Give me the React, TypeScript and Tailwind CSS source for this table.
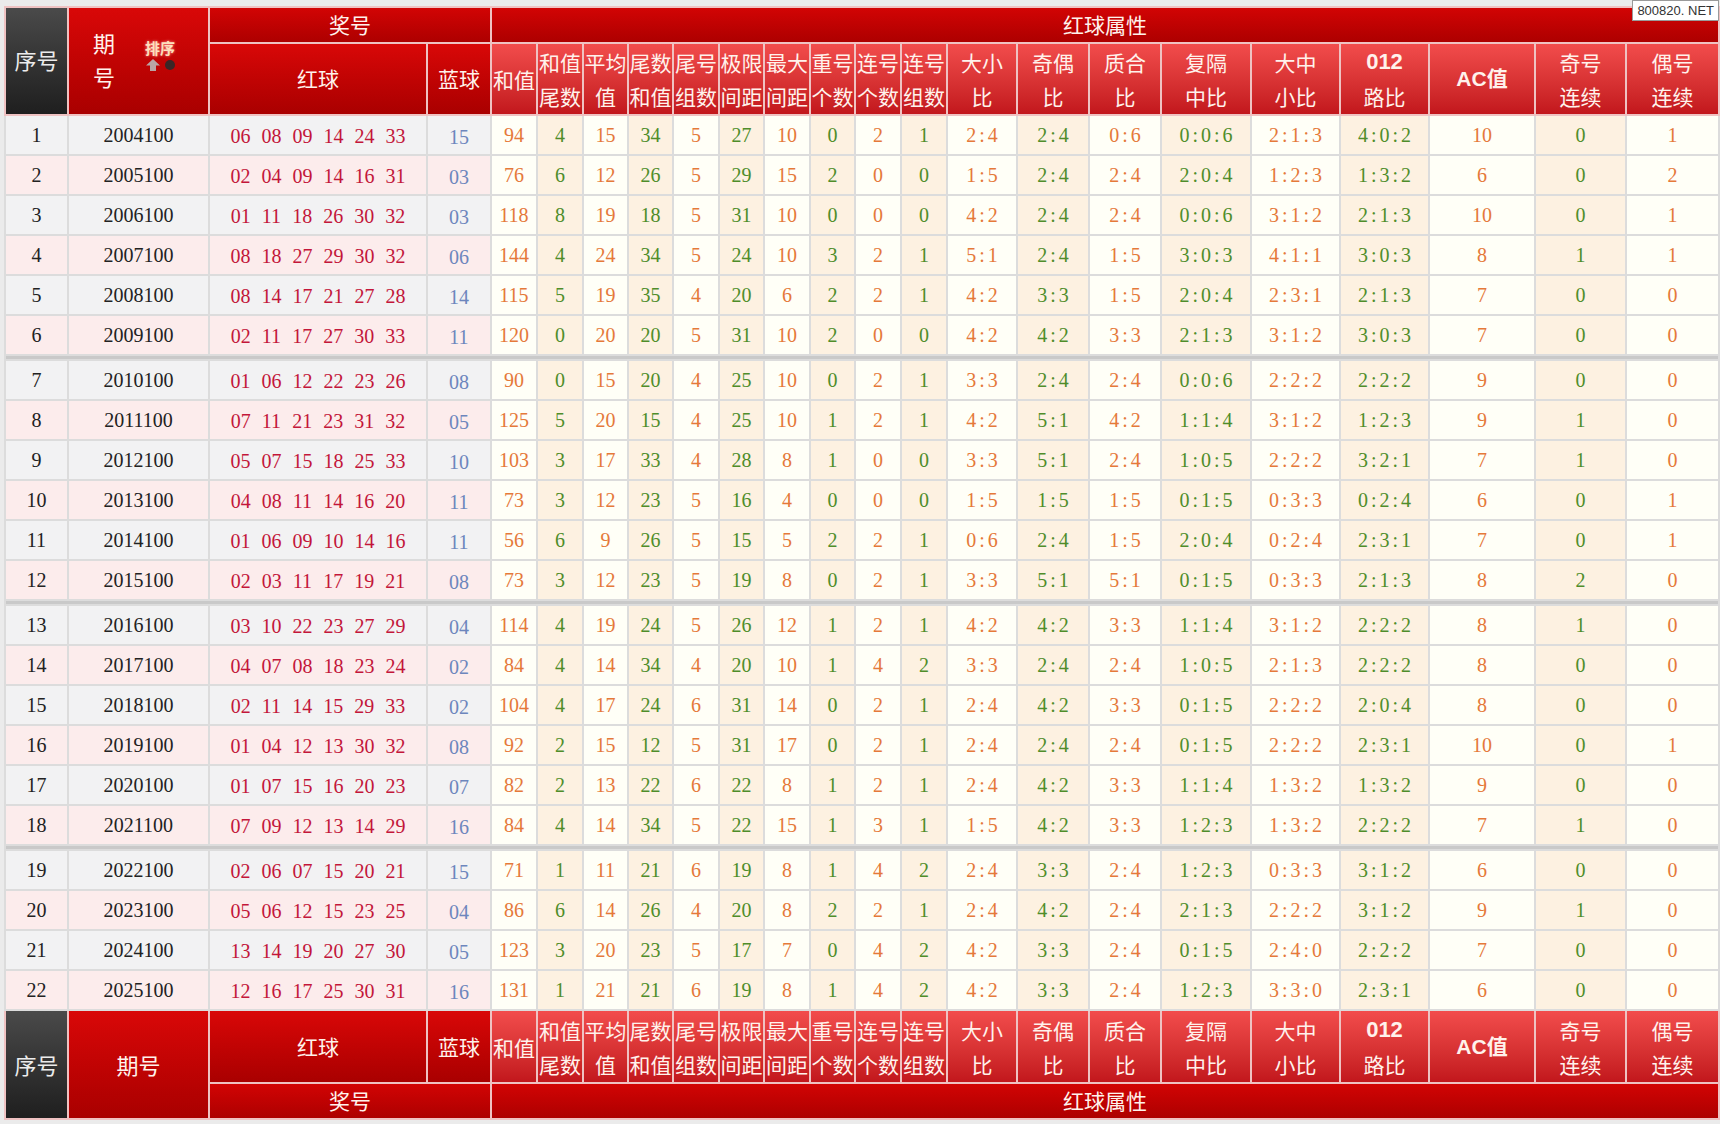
import React from 'react';

// column widths (序号, 期号, 红球, 蓝球, then 19 attribute columns)
const COL_W = [
  'w-[63px]', 'w-[141px]', 'w-[218px]', 'w-[64px]',
  'w-[46px]', 'w-[46px]', 'w-[45px]', 'w-[45px]', 'w-[46px]', 'w-[45px]', 'w-[46px]', 'w-[45px]', 'w-[46px]', 'w-[46px]',
  'w-[70px]', 'w-[72px]', 'w-[72px]', 'w-[90px]', 'w-[89px]', 'w-[89px]', 'w-[106px]', 'w-[91px]', 'w-[93px]',
];

const ATTRS: { a: string; b?: string; sans?: boolean }[] = [
  { a: '和值' },
  { a: '和值', b: '尾数' },
  { a: '平均', b: '值' },
  { a: '尾数', b: '和值' },
  { a: '尾号', b: '组数' },
  { a: '极限', b: '间距' },
  { a: '最大', b: '间距' },
  { a: '重号', b: '个数' },
  { a: '连号', b: '个数' },
  { a: '连号', b: '组数' },
  { a: '大小', b: '比' },
  { a: '奇偶', b: '比' },
  { a: '质合', b: '比' },
  { a: '复隔', b: '中比' },
  { a: '大中', b: '小比' },
  { a: '012', b: '路比', sans: true },
  { a: 'AC值', sans: true },
  { a: '奇号', b: '连续' },
  { a: '偶号', b: '连续' },
];

const RAW = [
  '2004100|06 08 09 14 24 33|15|94 4 15 34 5 27 10 0 2 1 2:4 2:4 0:6 0:0:6 2:1:3 4:0:2 10 0 1',
  '2005100|02 04 09 14 16 31|03|76 6 12 26 5 29 15 2 0 0 1:5 2:4 2:4 2:0:4 1:2:3 1:3:2 6 0 2',
  '2006100|01 11 18 26 30 32|03|118 8 19 18 5 31 10 0 0 0 4:2 2:4 2:4 0:0:6 3:1:2 2:1:3 10 0 1',
  '2007100|08 18 27 29 30 32|06|144 4 24 34 5 24 10 3 2 1 5:1 2:4 1:5 3:0:3 4:1:1 3:0:3 8 1 1',
  '2008100|08 14 17 21 27 28|14|115 5 19 35 4 20 6 2 2 1 4:2 3:3 1:5 2:0:4 2:3:1 2:1:3 7 0 0',
  '2009100|02 11 17 27 30 33|11|120 0 20 20 5 31 10 2 0 0 4:2 4:2 3:3 2:1:3 3:1:2 3:0:3 7 0 0',
  '2010100|01 06 12 22 23 26|08|90 0 15 20 4 25 10 0 2 1 3:3 2:4 2:4 0:0:6 2:2:2 2:2:2 9 0 0',
  '2011100|07 11 21 23 31 32|05|125 5 20 15 4 25 10 1 2 1 4:2 5:1 4:2 1:1:4 3:1:2 1:2:3 9 1 0',
  '2012100|05 07 15 18 25 33|10|103 3 17 33 4 28 8 1 0 0 3:3 5:1 2:4 1:0:5 2:2:2 3:2:1 7 1 0',
  '2013100|04 08 11 14 16 20|11|73 3 12 23 5 16 4 0 0 0 1:5 1:5 1:5 0:1:5 0:3:3 0:2:4 6 0 1',
  '2014100|01 06 09 10 14 16|11|56 6 9 26 5 15 5 2 2 1 0:6 2:4 1:5 2:0:4 0:2:4 2:3:1 7 0 1',
  '2015100|02 03 11 17 19 21|08|73 3 12 23 5 19 8 0 2 1 3:3 5:1 5:1 0:1:5 0:3:3 2:1:3 8 2 0',
  '2016100|03 10 22 23 27 29|04|114 4 19 24 5 26 12 1 2 1 4:2 4:2 3:3 1:1:4 3:1:2 2:2:2 8 1 0',
  '2017100|04 07 08 18 23 24|02|84 4 14 34 4 20 10 1 4 2 3:3 2:4 2:4 1:0:5 2:1:3 2:2:2 8 0 0',
  '2018100|02 11 14 15 29 33|02|104 4 17 24 6 31 14 0 2 1 2:4 4:2 3:3 0:1:5 2:2:2 2:0:4 8 0 0',
  '2019100|01 04 12 13 30 32|08|92 2 15 12 5 31 17 0 2 1 2:4 2:4 2:4 0:1:5 2:2:2 2:3:1 10 0 1',
  '2020100|01 07 15 16 20 23|07|82 2 13 22 6 22 8 1 2 1 2:4 4:2 3:3 1:1:4 1:3:2 1:3:2 9 0 0',
  '2021100|07 09 12 13 14 29|16|84 4 14 34 5 22 15 1 3 1 1:5 4:2 3:3 1:2:3 1:3:2 2:2:2 7 1 0',
  '2022100|02 06 07 15 20 21|15|71 1 11 21 6 19 8 1 4 2 2:4 3:3 2:4 1:2:3 0:3:3 3:1:2 6 0 0',
  '2023100|05 06 12 15 23 25|04|86 6 14 26 4 20 8 2 2 1 2:4 4:2 2:4 2:1:3 2:2:2 3:1:2 9 1 0',
  '2024100|13 14 19 20 27 30|05|123 3 20 23 5 17 7 0 4 2 4:2 3:3 2:4 0:1:5 2:4:0 2:2:2 7 0 0',
  '2025100|12 16 17 25 30 31|16|131 1 21 21 6 19 8 1 4 2 4:2 3:3 2:4 1:2:3 3:3:0 2:3:1 6 0 0',
];

const ROWS = RAW.map((line) => {
  const [issue, reds, blue, attrs] = line.split('|');
  return { issue, reds: reds.split(' '), blue, attrs: attrs.split(' ') };
});

const CJK = "font-['Noto_Sans_CJK_SC',sans-serif]";
const HEAD_BORDER = 'border-2 border-[#efc2c2]';
const DARK_HEAD = 'bg-linear-to-b from-[#4a4a4a] to-[#1f1f1f] text-[#ececec]';
const RED_HEAD = 'bg-linear-to-b from-[#d90808] to-[#a90000] text-[#fff2ec]';
const BAR_HEAD = 'bg-linear-to-b from-[#d20404] to-[#ad0000] text-[#fff2ec]';
const ATTR_HEAD = 'bg-linear-to-b from-[#f24c4c] to-[#c2161c] text-[#fff2ec]';

function AttrHeads() {
  return (
    <>
      {ATTRS.map((c, i) => (
        <th key={i} className={`${HEAD_BORDER} ${ATTR_HEAD} p-0 font-normal text-[21px] leading-[34px] ${CJK}`}>
          {c.sans ? (
            c.b ? (
              <>
                <div className="font-['Liberation_Sans',sans-serif] font-bold text-[22px]">{c.a}</div>
                <div>{c.b}</div>
              </>
            ) : (
              <div className="font-['Liberation_Sans','Noto_Sans_CJK_SC',sans-serif] font-bold text-[21px]">{c.a}</div>
            )
          ) : (
            <>
              <div>{c.a}</div>
              {c.b && <div>{c.b}</div>}
            </>
          )}
        </th>
      ))}
    </>
  );
}

// ratio values like 2:1:3 — the colon gets a full digit's width, as in the original font
function Ratio({ value }: { value: string }) {
  const parts = value.split(':');
  return (
    <>
      {parts.map((p, i) => (
        <React.Fragment key={i}>
          {i > 0 && <span className="mx-[3px]">:</span>}
          {p}
        </React.Fragment>
      ))}
    </>
  );
}

function SortMark() {
  return (
    <div className="flex flex-col items-center mb-[8px]">
      <span className="text-[15px] font-bold leading-[18px] text-[#fde0bd] [text-shadow:0_0_3px_#ff9a9a]">排序</span>
      <span className="flex items-center gap-[5px] mt-[2px]">
        <svg width="14" height="12" viewBox="0 0 14 12">
          <polygon points="7,0 14,6.5 10,6.5 10,12 4,12 4,6.5 0,6.5" fill="#b9a5a5" />
        </svg>
        <span className="w-[10px] h-[10px] rounded-full bg-[#3a2626]" />
      </span>
    </div>
  );
}

function Separator() {
  return (
    <tr>
      <td colSpan={23} className="p-0 h-[5px] bg-[#c9c9c9] border-x-2 border-[#dcdcdc]" />
    </tr>
  );
}

export default function App() {
  return (
    <div className="relative w-[1720px] h-[1124px] overflow-hidden bg-[#ebebeb] pt-[6px] pl-[4px]">
      <table className="table-fixed border-collapse w-[1714px] font-['Liberation_Serif','Noto_Sans_CJK_SC',serif]">
        <colgroup>
          {COL_W.map((w, i) => (
            <col key={i} className={w} />
          ))}
        </colgroup>
        <thead>
          <tr className="h-[36px]">
            <th rowSpan={2} className={`${HEAD_BORDER} ${DARK_HEAD} p-0 pb-[4px] font-normal text-[22px] ${CJK}`}>序号</th>
            <th rowSpan={2} className={`${HEAD_BORDER} ${RED_HEAD} p-0 font-normal text-[22px] ${CJK}`}>
              <div className="flex items-center gap-[30px] pl-[24px] pb-[4px]">
                <div className="flex flex-col leading-[34px]">
                  <span>期</span>
                  <span>号</span>
                </div>
                <SortMark />
              </div>
            </th>
            <th colSpan={2} className={`${HEAD_BORDER} ${BAR_HEAD} p-0 font-normal text-[21px] ${CJK}`}>奖号</th>
            <th colSpan={19} className={`${HEAD_BORDER} ${BAR_HEAD} p-0 font-normal text-[21px] ${CJK}`}>红球属性</th>
          </tr>
          <tr className="h-[72px]">
            <th className={`${HEAD_BORDER} ${RED_HEAD} p-0 font-normal text-[21px] ${CJK}`}>红球</th>
            <th className={`${HEAD_BORDER} ${RED_HEAD} p-0 font-normal text-[21px] ${CJK}`}>蓝球</th>
            <AttrHeads />
          </tr>
        </thead>
        <tbody>
          {ROWS.map((r, i) => (
            <React.Fragment key={r.issue}>
              {i > 0 && i % 6 === 0 && <Separator />}
              <tr className={`h-[40px] text-[20px] ${i % 2 === 0 ? 'bg-[#f2f2f3]' : 'bg-[#fcecec]'}`}>
                <td className="border-2 border-[#dcdcdc] p-0 text-center text-[#222]">{i + 1}</td>
                <td className="border-2 border-[#dcdcdc] p-0 text-center text-[#222]">{r.issue}</td>
                <td className="border-2 border-[#dcdcdc] p-0 text-[#c3163a]">
                  <div className="flex justify-center gap-[11px] pt-[2px]">
                    {r.reds.map((n, k) => (
                      <span key={k}>{n}</span>
                    ))}
                  </div>
                </td>
                <td className="border-2 border-[#dcdcdc] p-0 pt-[3px] text-center text-[#6d86bd]">{r.blue}</td>
                {r.attrs.map((v, k) => (
                  <td
                    key={k}
                    className={`border-2 border-[#dcdcdc] p-0 text-center ${
                      k % 2 === 0 ? 'bg-[#fffff7] text-[#e5793a]' : 'bg-[#fdf1e1] text-[#4f8d2a]'
                    }`}
                  >
                    <Ratio value={v} />
                  </td>
                ))}
              </tr>
            </React.Fragment>
          ))}
        </tbody>
        <tfoot>
          <tr className="h-[73px]">
            <th rowSpan={2} className={`${HEAD_BORDER} ${DARK_HEAD} p-0 font-normal text-[22px] ${CJK}`}>序号</th>
            <th rowSpan={2} className={`${HEAD_BORDER} ${RED_HEAD} p-0 font-normal text-[22px] ${CJK}`}>期号</th>
            <th className={`${HEAD_BORDER} ${RED_HEAD} p-0 font-normal text-[21px] ${CJK}`}>红球</th>
            <th className={`${HEAD_BORDER} ${RED_HEAD} p-0 font-normal text-[21px] ${CJK}`}>蓝球</th>
            <AttrHeads />
          </tr>
          <tr className="h-[36px]">
            <th colSpan={2} className={`${HEAD_BORDER} ${BAR_HEAD} p-0 font-normal text-[21px] ${CJK}`}>奖号</th>
            <th colSpan={19} className={`${HEAD_BORDER} ${BAR_HEAD} p-0 font-normal text-[21px] ${CJK}`}>红球属性</th>
          </tr>
        </tfoot>
      </table>

      {/* site badge */}
      <div className="absolute top-0 right-[1px] bg-white border border-[#9a9a9a] px-[4px] h-[21px] leading-[19px] text-[13px] text-[#333] font-['Liberation_Sans_Narrow','Liberation_Sans',sans-serif]">
        800820. NET
      </div>
    </div>
  );
}
